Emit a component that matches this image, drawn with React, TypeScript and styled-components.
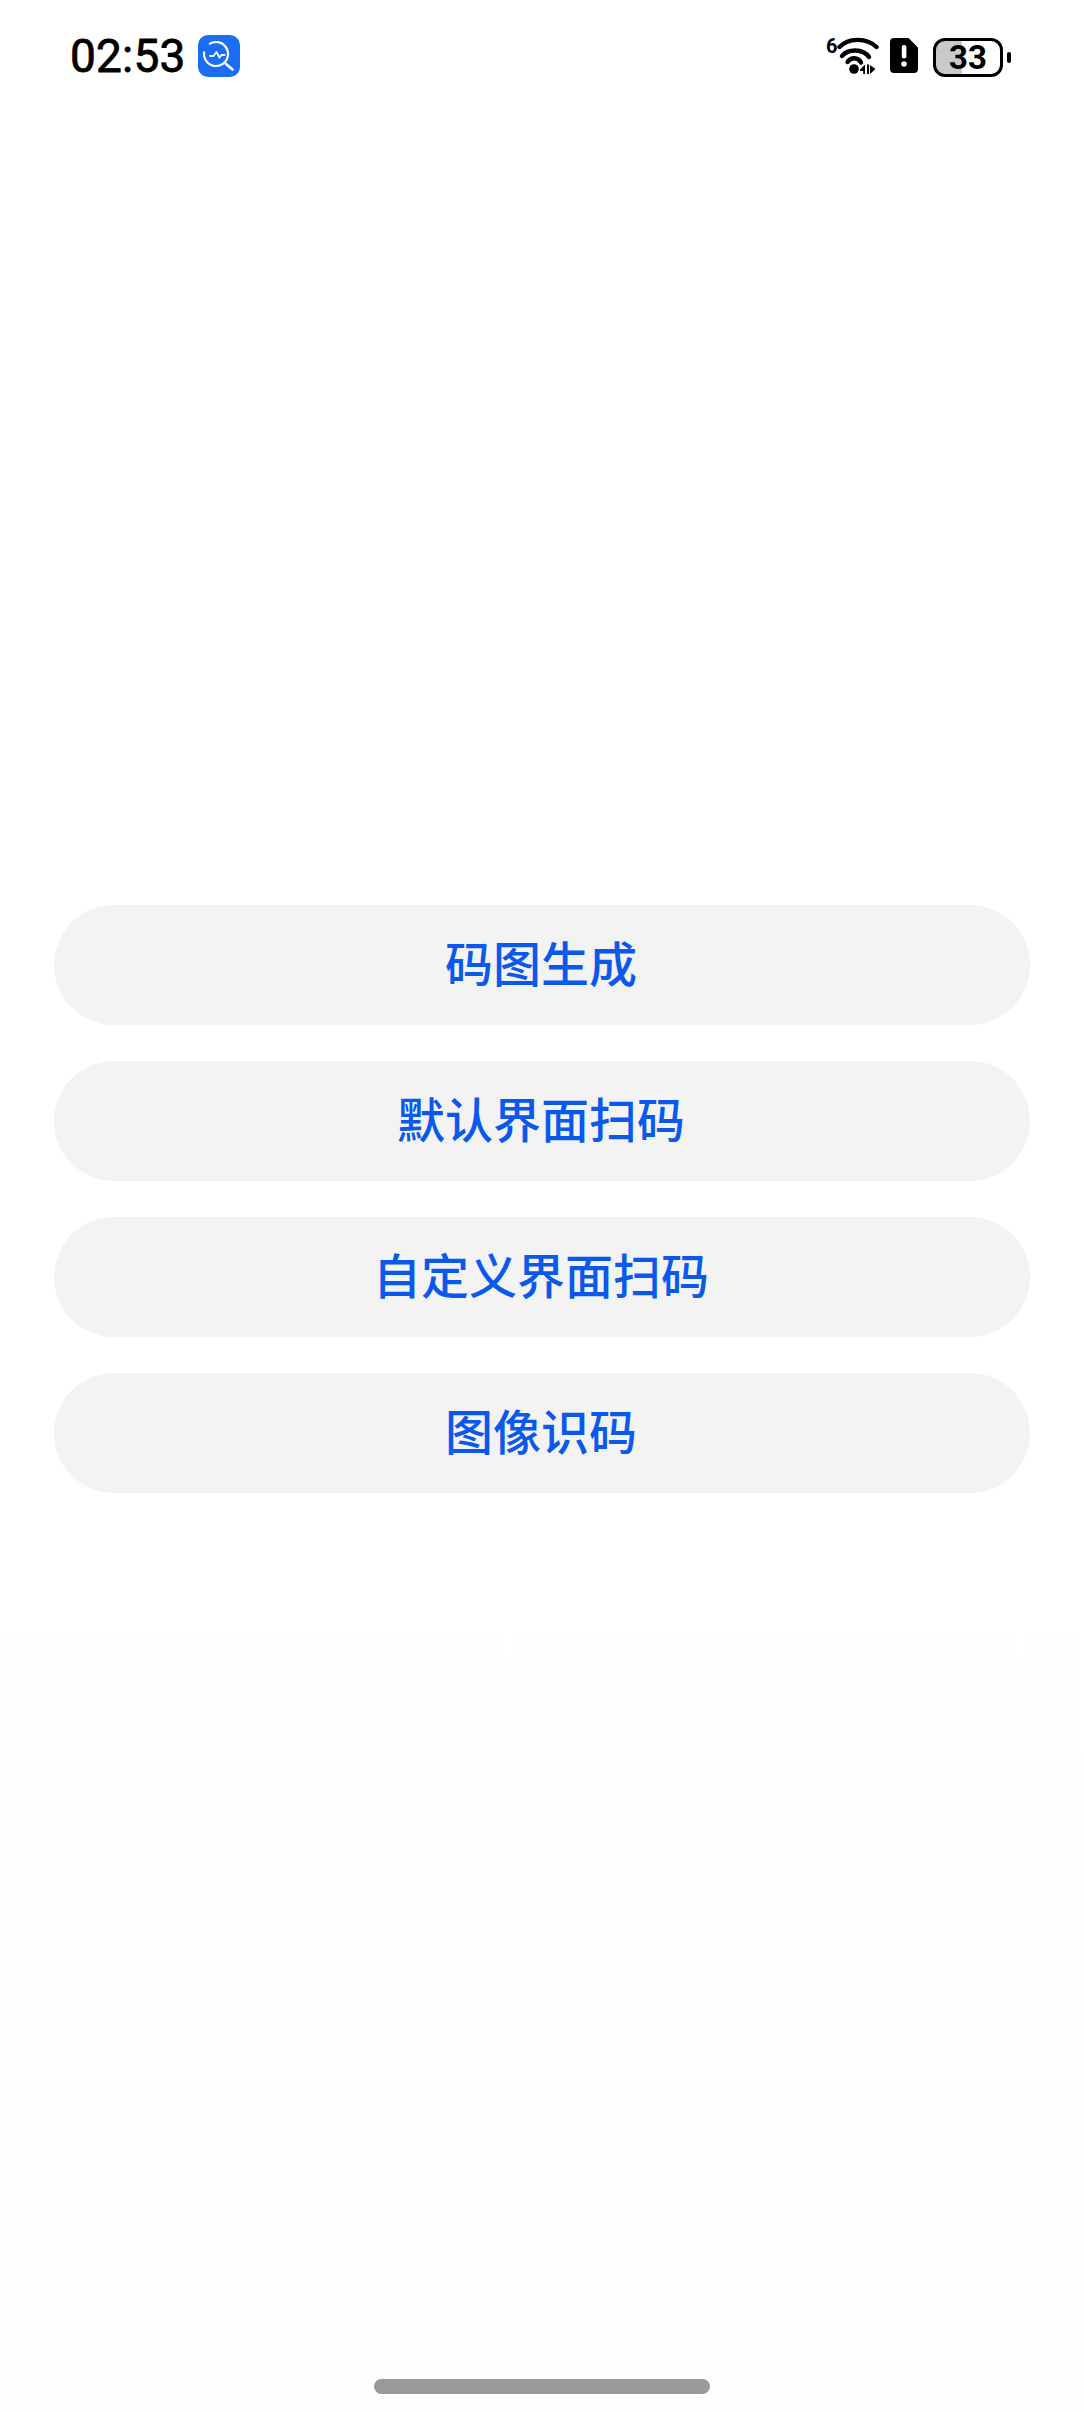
import React from "react";
import styled, { createGlobalStyle } from "styled-components";

const Global = createGlobalStyle`
  html, body { margin: 0; padding: 0; background: #fff; }
`;

const Page = styled.div`
  width: 1084px;
  height: 2412px;
  display: flex;
  flex-direction: column;
  background: linear-gradient(#fff 60%, #fefefe);
  overflow: hidden;
  font-family: Inter, "Noto Sans CJK SC", sans-serif;
`;

const StatusBar = styled.header`
  height: 112px;
  box-sizing: border-box;
  padding: 34px 70px 0 70px;
  display: flex;
  justify-content: space-between;
  align-items: flex-start;
`;

const LeftGroup = styled.div`
  display: flex;
  align-items: center;
  gap: 15px;
`;

const Time = styled.span`
  width: 113px;
  font-family: Roboto, Inter, sans-serif;
  font-size: 46px;
  line-height: 44px;
  font-weight: 400;
  color: #000;
  white-space: nowrap;
  letter-spacing: 0.2px;
  -webkit-text-stroke: 0.8px #000;
`;

const AppIcon = styled.svg`
  width: 42px;
  height: 42px;
  display: block;
`;

const RightGroup = styled.div`
  display: flex;
  align-items: flex-start;
  padding-top: 4px;
  margin-right: 3px;
`;

const WifiIcon = styled.svg`
  width: 55px;
  height: 46px;
  display: block;
  margin: -6px 11px 0 0;
`;

const WifiGeneration = styled.text`
  font-family: Roboto, sans-serif;
  font-size: 20px;
  font-weight: 700;
  fill: #000;
`;

const SimIcon = styled.svg`
  width: 28px;
  height: 35px;
  display: block;
  margin-right: 15px;
`;

const Battery = styled.div`
  width: 70px;
  height: 39px;
  box-sizing: border-box;
  border: 3px solid #000;
  border-radius: 12px;
  background: linear-gradient(to right, #c9c9c9 0 41%, transparent 41%);
  display: flex;
  align-items: center;
  justify-content: center;
  margin-right: 4px;
`;

const BatteryText = styled.span`
  font-family: Roboto, Inter, sans-serif;
  font-size: 33px;
  line-height: 33px;
  font-weight: 700;
  color: #000;
`;

const BatteryNub = styled.div`
  width: 4px;
  height: 11px;
  margin-top: 14px;
  border-radius: 2px;
  background: #000;
`;

const ButtonList = styled.main`
  display: flex;
  flex-direction: column;
  gap: 36px;
  padding: 793px 54px 0;
`;

const ActionButton = styled.button`
  height: 120px;
  width: 100%;
  border: 0;
  border-radius: 60px;
  background: #f3f3f4;
  color: #0a59ec;
  font-family: "Noto Sans CJK SC", sans-serif;
  font-size: 48px;
  font-weight: 500;
  padding: 0 2px 8px 0;
  display: flex;
  align-items: center;
  justify-content: center;
`;

const HomeIndicator = styled.div`
  width: 336px;
  height: 15px;
  border-radius: 8px;
  background: #999;
  margin: auto auto 18px;
`;

const labels = ["码图生成", "默认界面扫码", "自定义界面扫码", "图像识码"];

export default function App() {
  return (
    <Page>
      <Global />
      <StatusBar>
        <LeftGroup>
          <Time>02:53</Time>
          <AppIcon viewBox="0 0 42 42">
            <rect width="42" height="42" rx="10" fill="#1b6ef3" />
            <circle cx="18" cy="19" r="12" fill="none" stroke="#fff" strokeWidth="2.2" strokeDasharray="66 9.4" transform="rotate(-125 18 19)" />
            <path d="M28 29L34.5 34.5" stroke="#fff" strokeWidth="2.6" strokeLinecap="round" />
            <path d="M12 21h3.5l3-4 3 5.5 2-2.5h3" fill="none" stroke="#fff" strokeWidth="1.8" strokeLinecap="round" strokeLinejoin="round" />
          </AppIcon>
        </LeftGroup>
        <RightGroup>
          <WifiIcon viewBox="0 -6 55 46">
            <WifiGeneration x="2" y="15">6</WifiGeneration>
            <path d="M15.5 9C24 0 42 -1 52.5 9" fill="none" stroke="#000" strokeWidth="4.4" strokeLinecap="round" />
            <path d="M18 18C24 10.5 39 10.5 45 19" fill="none" stroke="#000" strokeWidth="4.4" strokeLinecap="round" />
            <path d="M23.5 24C27 19 34 19 37 24.5" fill="none" stroke="#000" strokeWidth="4.4" strokeLinecap="round" />
            <circle cx="30" cy="31" r="4.8" fill="#000" />
            <path d="M36 31.5 41 26.5V36h-1.8v-3H36zM43 26.5h2V36h-2zM46 27l5.5 4-5.5 5z" fill="#000" />
          </WifiIcon>
          <SimIcon viewBox="0 0 28 35">
            <path d="M4 0h14.5L28 9.5V31a4 4 0 0 1-4 4H4a4 4 0 0 1-4-4V4a4 4 0 0 1 4-4z" fill="#000" />
            <rect x="11.8" y="7" width="4.6" height="13.5" rx="2" fill="#fff" />
            <circle cx="14" cy="26" r="2.8" fill="#fff" />
          </SimIcon>
          <Battery>
            <BatteryText>33</BatteryText>
          </Battery>
          <BatteryNub />
        </RightGroup>
      </StatusBar>
      <ButtonList>
        {labels.map((label) => (
          <ActionButton key={label}>{label}</ActionButton>
        ))}
      </ButtonList>
      <HomeIndicator />
    </Page>
  );
}
